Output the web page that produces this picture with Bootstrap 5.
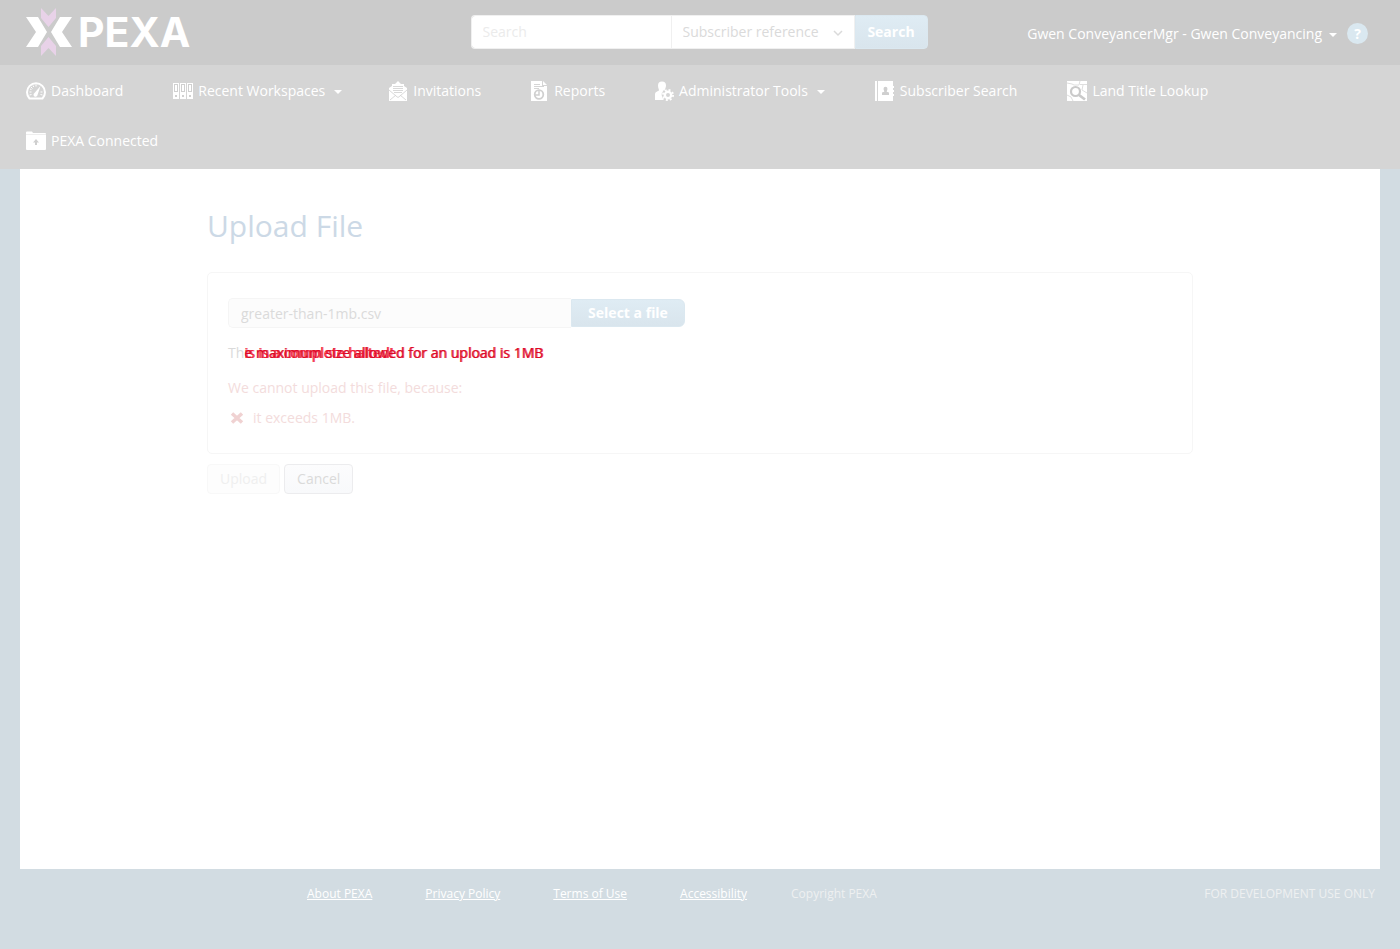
<!DOCTYPE html>
<html lang="en">
<head>
<meta charset="utf-8">
<meta name="viewport" content="width=device-width, initial-scale=1">
<title>Upload File - PEXA</title>
<link href="https://cdn.jsdelivr.net/npm/bootstrap@5.3.0/dist/css/bootstrap.min.css" rel="stylesheet">
<style>
  body { font-family: "Open Sans", sans-serif; font-size: 14px; line-height: 20px; background: #d2dce2; color: #dadada; }
  .topbar { background: #cbcbcb; min-height: 65px; padding: 0 28px 2px 26px; }
  .side { flex: 1 1 0; }
  .logo-word { font: 700 41px/48px Inter, sans-serif; color: #fff; margin-left: 6px; }
  .search-group { width: 457px; height: 34px; }
  .search-group .form-control, .search-group .form-select { font-size: 14px; line-height: 20px; border: 1px solid #f0f0f0; color: #dadada; height: 34px; }
  .search-group .form-control { border-radius: 4px 0 0 4px; border-right: 0; padding: 6px 12px 6px 11px; }
  .search-group .form-control::placeholder { color: #ebebeb; opacity: 1; }
  .search-group .form-select { background: #fff; appearance: none; border-radius: 0; padding: 6px 30px 6px 11px; }
  .select-wrap { flex: 0 0 184px; }
  .select-wrap svg { right: 12px; top: 14px; }
  .btn-soft { background: linear-gradient(#dfecf4, #d9e5ed); color: #fff; font-weight: 700; font-size: 14px; line-height: 20px; border: 1px solid #dbe8f0; border-radius: 0 6px 6px 0; padding: 3px 16px; }
  .search-group .btn-soft { flex: 0 0 73px; padding: 6px 0; border-radius: 0 4px 4px 0; }
  .user-link, .main-nav a { color: #fff; text-decoration: none; }
  .arrow-down { display: inline-block; border: 4px solid transparent; border-top-color: #fff; border-bottom: 0; margin-left: 7px; vertical-align: 2px; }
  .main-nav .arrow-down { margin-left: 9px; }
  .help-btn { width: 21px; height: 21px; border: 0; border-radius: 50%; background: #dae8f0; color: #fff; font-weight: 700; line-height: 20px; padding: 0; margin: 0 4px 0 10px; }
  .main-nav { background: #d5d5d5; padding: 1px 26px 3px; column-gap: 50px; }
  .main-nav a { height: 50px; gap: 5px; }
  .main-nav .after-menu { margin-left: -4px; }
  .page-body { background: #fff; margin: 0 20px; padding: 37px 20px; }
  .page-inner { max-width: 986px; }
  h1 { font-size: 30px; line-height: 40px; font-weight: 400; color: #ccd9e6; margin-bottom: 26px; }
  .upload-panel { border: 1px solid #f6f6f6; border-radius: 5px; padding: 25px 20px; }
  .file-group { max-width: 457px; height: 30px; }
  .file-group .form-control { background: #fcfcfc; border: 1px solid #f5f5f5; border-right: 0; border-radius: 5px 0 0 5px; font-size: 14px; line-height: 20px; padding: 4px 12px; color: #dadada; height: 30px; }
  .file-group .btn-soft { flex: 0 0 114px; height: 28px; }
  .size-note { margin: 15px 0; }
  .size-note .alert-text { color: #dc0a28; text-shadow: 1px 0 #ee4a5e; }
  .size-note .under { left: 0; top: 0; color: #f5203c; white-space: nowrap; }
  .size-note .over { position: relative; }
  .reason { color: #f3dcdc; margin-bottom: 10px; }
  .actions { margin-top: 10px; }
  .btn-plain { font-size: 14px; line-height: 20px; padding: 4px 12px; border: 1px solid #ececee; border-radius: 4px; background: linear-gradient(#fcfcfd, #f8f9fb); color: #dadada; }
  .btn-plain:disabled { border-color: #f8f8f8; background: #fdfdfd; color: #efefef; opacity: 1; }
  .site-footer { min-height: 80px; font-size: 12px; line-height: 18px; padding: 16px 25px 0 307px; color: #eef0f1; }
  .site-footer a { color: #fff; margin-right: 53px; }
  .site-footer a:last-of-type { margin-right: 44px; }
</style>
</head>
<body class="d-flex flex-column min-vh-100">
<header class="topbar d-flex align-items-center">
  <a href="#" class="side d-flex align-items-center text-decoration-none" aria-label="PEXA home">
    <svg width="46" height="48" viewBox="0 0 46 48" aria-hidden="true">
      <path d="M0 9h12l9 15-9 15H0l10-15zM46 9H34l-9 15 9 15h12L36 24z" fill="#fff"/>
      <path d="M15 0l7.500 8L30 0v10l-7.500 9L15 10zM15 48l7.500-8 7.500 8V38l-7.500-9L15 38z" fill="#e8d2e8"/>
    </svg>
    <span class="logo-word">PEXA</span>
  </a>
  <form class="search-group d-flex" role="search">
    <input class="form-control" type="search" placeholder="Search" aria-label="Search">
    <div class="select-wrap position-relative">
      <select class="form-select" aria-label="Search by"><option>Subscriber reference</option></select>
      <svg class="position-absolute pe-none" width="10" height="8" viewBox="0 0 10 8" fill="none" stroke="#dadada" stroke-width="1.500"><path d="M1 2l4 4 4-4"/></svg>
    </div>
    <button class="btn btn-soft" type="button">Search</button>
  </form>
  <div class="side d-flex align-items-center justify-content-end text-nowrap pt-1">
    <a href="#" class="user-link">Gwen ConveyancerMgr - Gwen Conveyancing<span class="arrow-down"></span></a>
    <button class="help-btn" type="button" aria-label="Help">?</button>
  </div>
</header>
<nav class="main-nav d-flex flex-wrap" aria-label="Main">
  <a href="#" class="d-flex align-items-center">
    <svg width="20" height="20" viewBox="0 0 20 20"><path d="M3.500 17.500a9 9 0 1 1 13 0z" fill="none" stroke="#fff" stroke-width="2"/><path d="M3.500 11h2M5 6l1.500 1.500M10 3.500v2M16.500 11h-2M4 8l1.500.600M7 4.500l.700 1.500M3.500 14l2-.5M16.500 14l-2-.5" stroke="#fff" fill="none"/><path d="M14.500 5l-3 9a2 2 0 1 1-3-2z" fill="#fff"/></svg>
    Dashboard</a>
  <a href="#" class="d-flex align-items-center">
    <svg width="20" height="20" viewBox="0 0 20 20" shape-rendering="crispEdges"><path d="M0 2h6v16H0zM7 2h6v16H7zM14 2h6v16h-6z" fill="#fff"/><path d="M1.500 3.500h3v7h-3zM8.500 3.500h3v7h-3zM15.500 3.500h3v7h-3z" fill="none" stroke="#d0d0d0"/><path d="M2 14h2v2H2zM9 14h2v2H9zM16 14h2v2h-2z" fill="#d0d0d0"/></svg>
    <span>Recent Workspaces<span class="arrow-down"></span></span></a>
  <a href="#" class="after-menu d-flex align-items-center">
    <svg width="20" height="20" viewBox="0 0 20 20"><path d="M1 7l3-2V3h3l3-3 3 3h3v2l3 2v13H1z" fill="#fff"/><path d="M5 5.500h10M5 7.500h10M5 9.500h10M6 11.500h8M1 9l7 6 2 1.500 2-1.500 7-6M2 19l6-5M18 19l-6-5" fill="none" stroke="#d5d5d5" stroke-width=".9"/></svg>
    Invitations</a>
  <a href="#" class="d-flex align-items-center">
    <svg width="18" height="20" viewBox="0 0 18 20"><path d="M0 0h11v5h5v15H0zM12 0l4 4h-4z" fill="#fff"/><path d="M3 3.500h6M3 5.500h10M3 7.500h5" stroke="#d5d5d5"/><circle cx="8" cy="13.500" r="4.300" fill="none" stroke="#d0d0d0" stroke-width="1.800"/><path d="M8 9v5H3" fill="none" stroke="#d0d0d0" stroke-width="1.500"/></svg>
    Reports</a>
  <a href="#" class="d-flex align-items-center">
    <svg width="19" height="20" viewBox="0 0 19 20"><path d="M3 4.500a4 4 0 0 1 8 0c0 2-1 3-1 4.500l3 1.500V19H0v-6c0-2 2-2.500 4-3.500C4 8 3 7 3 4.500z" fill="#fff"/><circle cx="13" cy="14" r="6.300" fill="#d5d5d5"/><circle cx="13" cy="14" r="3.200" fill="none" stroke="#fff" stroke-width="2.400"/><circle cx="13" cy="14" r="5.100" fill="none" stroke="#fff" stroke-width="1.800" stroke-dasharray="2 2"/></svg>
    <span>Administrator Tools<span class="arrow-down"></span></span></a>
  <a href="#" class="d-flex align-items-center">
    <svg width="20" height="20" viewBox="0 0 20 20"><path d="M0 0h2v20H0zM3 0h15v20H3zM18 5h1v2h-1zM18 9h1v2h-1zM18 13h1v2h-1z" fill="#fff"/><path d="M8.500 8a2 2.300 0 0 1 4 0l-.8 2.700 2.300.8V14H7v-2.500l2.300-.8z" fill="#cfcfcf"/></svg>
    Subscriber Search</a>
  <a href="#" class="d-flex align-items-center">
    <svg width="20" height="20" viewBox="0 0 20 20"><path d="M0 0h20v20H0z" fill="#fff"/><path d="M0 2l5 1 2 1h5l1-4M13 3.500h7M16 4l-1 5 5 3M0 14l4 2 2 4" fill="none" stroke="#dedede"/><circle cx="8.500" cy="10.500" r="4.500" fill="#fff" stroke="#cacaca" stroke-width="2.200"/><path d="M12 14l6 4.500" stroke="#cacaca" stroke-width="2.800"/></svg>
    Land Title Lookup</a>
  <a href="#" class="d-flex align-items-center">
    <svg width="20" height="20" viewBox="0 0 20 20"><path d="M0 1.500Q0 .5 1 .5h5l1 1.500h12q1 0 1 1v15q0 1-1 1H1q-1 0-1-1z" fill="#fff"/><path d="M0 3.500h20" stroke="#eee"/><path d="M10 8l3 3.500h-2V14H9v-2.500H7z" fill="#cfcfcf"/></svg>
    PEXA Connected</a>
</nav>
<main class="page-body flex-grow-1">
  <div class="page-inner mx-auto">
    <h1>Upload File</h1>
    <section class="upload-panel">
      <div class="file-group d-flex align-items-center">
        <input class="form-control" type="text" value="greater-than-1mb.csv" readonly aria-label="Selected file">
        <button class="btn btn-soft text-nowrap" type="button">Select a file</button>
      </div>
      <p class="size-note">Th<span class="position-relative alert-text"><span class="position-absolute under">is is a complete halted!</span><span class="over">e maximum size allowed for an upload is 1MB</span></span></p>
      <p class="reason">We cannot upload this file, because:</p>
      <p class="reason d-flex align-items-center mb-0">
        <svg class="me-2" width="17" height="12" viewBox="-3 0 17 12" stroke="#f0d2d2" stroke-width="3.500"><path d="M1 1.500l10 9M11 1.500l-10 9"/></svg>
        <span>it exceeds 1MB.</span>
      </p>
    </section>
    <div class="actions d-flex gap-1">
      <button class="btn btn-plain" type="button" disabled>Upload</button>
      <button class="btn btn-plain" type="button">Cancel</button>
    </div>
  </div>
</main>
<footer class="site-footer d-flex align-items-start">
  <a href="#">About PEXA</a><a href="#">Privacy Policy</a><a href="#">Terms of Use</a><a href="#">Accessibility</a>
  <span>Copyright PEXA</span>
  <span class="ms-auto">FOR DEVELOPMENT USE ONLY</span>
</footer>
<script src="https://cdn.jsdelivr.net/npm/bootstrap@5.3.0/dist/js/bootstrap.bundle.min.js"></script>
</body>
</html>
